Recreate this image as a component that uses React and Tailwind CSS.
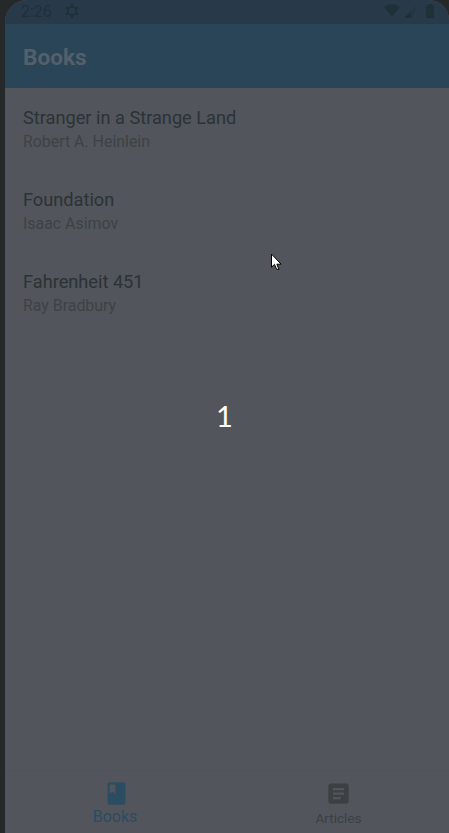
const books = [
  { title: 'Stranger in a Strange Land', author: 'Robert A. Heinlein' },
  { title: 'Foundation', author: 'Isaac Asimov' },
  { title: 'Fahrenheit 451', author: 'Ray Bradbury' },
];

function StatusBar() {
  return (
    <div className="flex h-6 shrink-0 items-start bg-[#28394a] pl-4 pr-[15px] text-[#1f3036]">
      <span className="w-[43px] text-[16px] leading-[24px] text-[#22303c]">2:26</span>
      <svg className="mt-[3px] h-4 w-4" viewBox="0 0 16 16" fill="none" stroke="currentColor">
        <circle cx="8" cy="8" r="4.2" strokeWidth="1.8" />
        <path d="M8 1v2.5M8 12.5V15M2 4.5l2.2 1.3M11.8 10.2L14 11.5M2 11.5l2.2-1.3M11.8 5.8L14 4.5" strokeWidth="2.4" />
      </svg>
      <div className="ml-auto flex items-start">
        <svg className="mt-[4px] h-3 w-4" viewBox="0 0 16 12" fill="currentColor">
          <path d="M0 3Q8-3 16 3L8 12.5Z" />
        </svg>
        <svg className="ml-[4px] mt-[6px] h-3 w-3" viewBox="0 0 12 12" fill="currentColor">
          <path d="M0 12L7 5V12Z" />
          <path d="M7 5L12 0V4L9 9V12H7Z" opacity=".3" />
        </svg>
        <svg className="ml-[10px] mt-[4px] h-[14px] w-2" viewBox="0 0 8 14" fill="currentColor">
          <path d="M2 0H6V1.5H8V14H0V1.5H2Z" />
        </svg>
      </div>
    </div>
  );
}

export default function App() {
  return (
    <div
      className="relative flex h-[833px] w-[449px] overflow-hidden bg-[#25292a] pl-[5px]"
      style={{ fontFamily: 'Roboto, "Liberation Sans", sans-serif' }}
    >
      <div className="flex min-w-0 flex-1 flex-col overflow-hidden rounded-tl-[22px] rounded-tr-[20px] bg-[#52555c]">
        <StatusBar />
        <header className="flex h-16 shrink-0 items-center bg-[#2a4558] pl-[18px] pt-[4px]">
          <h1 className="text-[22.6px] font-bold leading-7 text-[#53606a]">Books</h1>
        </header>
        <main className="flex-1 pt-[1px]">
          {books.map((book) => (
            <div key={book.title} className="flex h-[82px] flex-col justify-center pl-[18px]">
              <div className="text-[18.2px] leading-6 text-[#2b3335]">{book.title}</div>
              <div className="text-[15.9px] leading-6 text-[#3d4345]">{book.author}</div>
            </div>
          ))}
        </main>
        <nav className="flex h-[63px] shrink-0 border-t border-[#50535a]">
          <div className="flex flex-1 flex-col items-center pt-[9px] text-[#2c4c62]">
            <svg className="ml-[1px] h-[27px] w-[27px]" viewBox="0 0 24 24" fill="currentColor">
              <path d="M18 2H6c-1.1 0-2 .9-2 2v16c0 1.1.9 2 2 2h12c1.1 0 2-.9 2-2V4c0-1.1-.9-2-2-2zM6 4h5v8l-2.5-1.5L6 12V4z" />
            </svg>
            <span className="mr-[1px] text-[16px] leading-5">Books</span>
          </div>
          <div className="flex flex-1 flex-col items-center pl-[2px] pt-[9px] text-[#3b4143]">
            <svg className="h-[27px] w-[27px]" viewBox="0 0 24 24" fill="currentColor">
              <path d="M19 3H5c-1.1 0-2 .9-2 2v14c0 1.1.9 2 2 2h14c1.1 0 2-.9 2-2V5c0-1.1-.9-2-2-2zm-5 14H7v-2h7v2zm3-4H7v-2h10v2zm0-4H7V7h10v2z" />
            </svg>
            <span className="mt-[1px] text-[13.6px] leading-5">Articles</span>
          </div>
        </nav>
      </div>
      <svg className="absolute left-[271px] top-[253px] h-[19px] w-[12px]" viewBox="0 0 12 19">
        <path d="M.5 1v13.2l3-2.8 2.2 5h2.2l-2-5.2h4.2Z" fill="white" stroke="black" />
      </svg>
      <div className="absolute left-[216px] top-[398px] font-[Lato] text-[29px] leading-9 text-white">1</div>
    </div>
  );
}
